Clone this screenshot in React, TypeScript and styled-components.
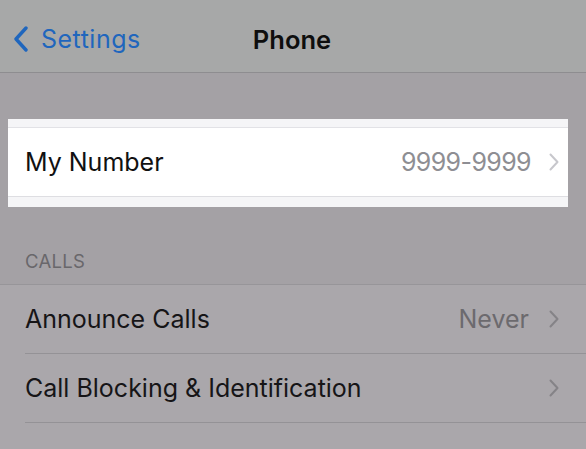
import styled, { createGlobalStyle } from 'styled-components';

const Global = createGlobalStyle`
  html, body {
    margin: 0;
    padding: 0;
    background: #a4a1a5;
  }
  body {
    font-family: Inter, "Open Sans", "Liberation Sans", sans-serif;
    -webkit-font-smoothing: antialiased;
  }
`;

const Screen = styled.div`
  width: 586px;
  height: 449px;
  overflow: hidden;
  display: flex;
  flex-direction: column;
  background: #a4a1a5;
`;

const NavBar = styled.div`
  height: 73px;
  flex-shrink: 0;
  box-sizing: border-box;
  padding-top: 6px;
  display: grid;
  grid-template-columns: 1fr auto 1fr;
  align-items: center;
  background: #a7a8a8;
  border-bottom: 1px solid #8e8d90;
`;

const BackButton = styled.div`
  display: flex;
  align-items: center;
  gap: 12px;
  padding-left: 13px;
  color: #1f66bd;
  font-size: 25px;
  letter-spacing: 0.5px;
`;

const Title = styled.div`
  font-size: 25.5px;
  font-weight: 600;
  color: #0e0e0e;
  padding-right: 2px;
`;

const Gap = styled.div<{ $h: number }>`
  height: ${({ $h }) => $h}px;
  flex-shrink: 0;
`;

const Spotlight = styled.div`
  margin: 0 18px 0 8px;
  padding: 8px 0 10px;
  background: #f5f5f7;
  flex-shrink: 0;
`;

const Group = styled.div<{ $dim?: boolean }>`
  background: ${({ $dim }) => ($dim ? '#aaa7ab' : '#ffffff')};
  border-top: 1px solid ${({ $dim }) => ($dim ? '#979599' : '#e2e2e6')};
  border-bottom: ${({ $dim }) => ($dim ? 'none' : '1px solid #dedee2')};
  flex: ${({ $dim }) => ($dim ? 1 : 'none')};
`;

const Row = styled.div<{ $sep?: boolean }>`
  height: 68px;
  display: flex;
  align-items: center;
  border-bottom: ${({ $sep }) => ($sep ? '1px solid #949296' : 'none')};
  margin-left: ${({ $sep }) => ($sep ? '25px' : '0')};
  padding-left: ${({ $sep }) => ($sep ? '0' : '17px')};
`;

const Label = styled.div<{ $dim?: boolean }>`
  flex: 1;
  font-size: 25px;
  color: ${({ $dim }) => ($dim ? '#161517' : '#111111')};
`;

const Value = styled.div<{ $dim?: boolean }>`
  font-size: 25px;
  letter-spacing: ${({ $dim }) => ($dim ? '0' : '-0.6px')};
  color: ${({ $dim }) => ($dim ? '#6c6a6e' : '#8e8e93')};
  margin-right: ${({ $dim }) => ($dim ? '20px' : '18px')};
`;

const Chevron = styled.svg<{ $dim?: boolean }>`
  width: 10px;
  height: 18px;
  margin-right: ${({ $dim }) => ($dim ? '27px' : '9px')};
  color: ${({ $dim }) => ($dim ? '#858387' : '#c7c7cc')};
`;

const SectionHeader = styled.div`
  height: 77px;
  flex-shrink: 0;
  display: flex;
  align-items: flex-end;
  padding: 0 0 13px 25px;
  box-sizing: border-box;
  font-size: 18.5px;
  line-height: 20px;
  color: #69676b;
  letter-spacing: 0.3px;
`;

function Arrow({ dim }: { dim?: boolean }) {
  return (
    <Chevron $dim={dim} viewBox="0 0 10 18" fill="none">
      <path d="M1.5 1.5 L8.5 9 L1.5 16.5" stroke="currentColor" strokeWidth="2" strokeLinecap="round" strokeLinejoin="round" />
    </Chevron>
  );
}

export default function App() {
  return (
    <Screen>
      <Global />
      <NavBar>
        <BackButton>
          <svg width="16" height="26" viewBox="0 0 16 26" fill="none">
            <path d="M13 2 L3 13 L13 24" stroke="currentColor" strokeWidth="3.4" strokeLinecap="round" strokeLinejoin="round" />
          </svg>
          Settings
        </BackButton>
        <Title>Phone</Title>
        <div />
      </NavBar>
      <Gap $h={46} />
      <Spotlight>
        <Group>
          <Row>
            <Label>My Number</Label>
            <Value>9999-9999</Value>
            <Arrow />
          </Row>
        </Group>
      </Spotlight>
      <SectionHeader>CALLS</SectionHeader>
      <Group $dim>
        <Row $sep>
          <Label $dim>Announce Calls</Label>
          <Value $dim>Never</Value>
          <Arrow dim />
        </Row>
        <Row $sep>
          <Label $dim>Call Blocking &amp; Identification</Label>
          <Arrow dim />
        </Row>
      </Group>
    </Screen>
  );
}
